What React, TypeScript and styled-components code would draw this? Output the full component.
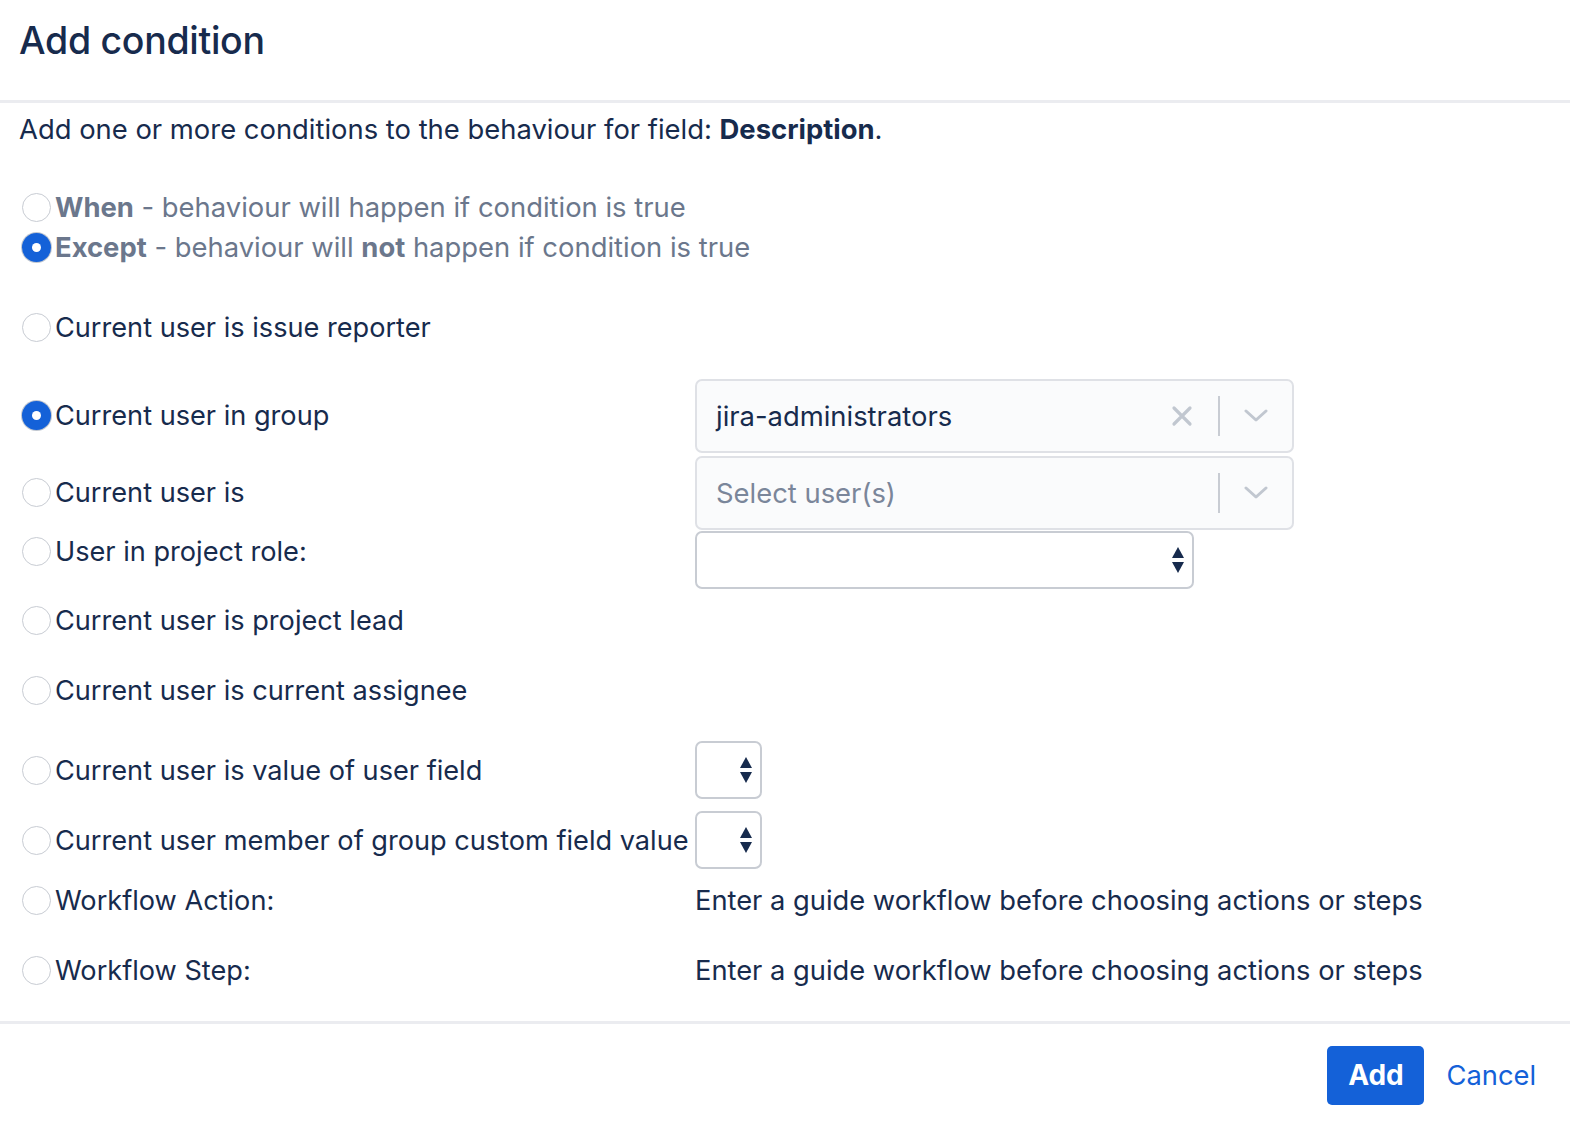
import React from "react";
import styled, { createGlobalStyle } from "styled-components";

const GlobalStyle = createGlobalStyle`
  html, body { margin: 0; padding: 0; background: #ffffff; }
  body {
    font-family: Inter, "Noto Sans", "Liberation Sans", sans-serif;
    color: #172b4d;
    -webkit-font-smoothing: antialiased;
  }
  * { box-sizing: border-box; }
`;

const Dialog = styled.div`
  width: 1570px;
  height: 1124px;
  display: flex;
  flex-direction: column;
  background: #fff;
`;

const Header = styled.header`
  height: 103px;
  padding: 0 20px 20px 19px;
  display: flex;
  align-items: center;
  border-bottom: 3px solid #ebecf0;
`;

const Title = styled.h2`
  margin: 0;
  font-size: 37.5px;
  font-weight: 500;
  color: #172b4d;
  letter-spacing: -0.3px;
`;

const Body = styled.div`
  padding: 0 20px 0 19px;
  flex: 1;
`;

const Intro = styled.p`
  margin: 2px 0 0;
  height: 48px;
  line-height: 48px;
  font-size: 27.4px;
  color: #172b4d;
`;

const ModeGroup = styled.div`
  margin-top: 34px;
  display: flex;
  flex-direction: column;
`;

const RadioLine = styled.label<{ $muted?: boolean }>`
  display: flex;
  align-items: center;
  gap: 4px;
  height: 40px;
  font-size: ${(p) => (p.$muted ? "27.4px" : "27.15px")};
  color: ${(p) => (p.$muted ? "#6b778c" : "#172b4d")};
  white-space: nowrap;
`;

const Radio = styled.span<{ $checked?: boolean }>`
  flex: none;
  margin-left: 3px;
  width: 29px;
  height: 29px;
  border-radius: 50%;
  display: flex;
  align-items: center;
  justify-content: center;
  background: ${(p) => (p.$checked ? "#1461d8" : "#fff")};
  border: ${(p) => (p.$checked ? "none" : "1.5px solid #c8ccd3")};
  box-shadow: ${(p) => (p.$checked ? "0 0 0 1px #c1c7d0" : "none")};
  &::after {
    content: "";
    display: ${(p) => (p.$checked ? "block" : "none")};
    width: 9px;
    height: 9px;
    border-radius: 50%;
    background: #fff;
  }
`;

const Strong = styled.strong`
  font-weight: 700;
`;

const Conditions = styled.div`
  margin-top: 10px;
  display: grid;
  grid-template-columns: 676px 1fr;
  grid-template-rows: 100px 77px 77px 59px 60px 80px 80px 60px 60px 80px;
`;

const Cell = styled.div<{ $top?: boolean }>`
  display: flex;
  align-items: ${(p) => (p.$top ? "flex-start" : "center")};
`;

const SelectBox = styled.div<{ $width: number; $height: number; $soft?: boolean }>`
  width: ${(p) => p.$width}px;
  height: ${(p) => p.$height}px;
  border: 2px solid ${(p) => (p.$soft ? "#dfe1e6" : "#c8ccd3")};
  border-radius: 7px;
  background: ${(p) => (p.$soft ? "#fafbfc" : "#fff")};
  display: flex;
  align-items: center;
  padding-left: 19px;
  font-size: 27.4px;
`;

const Value = styled.span<{ $placeholder?: boolean }>`
  flex: 1;
  color: ${(p) => (p.$placeholder ? "#7a869a" : "#172b4d")};
`;

const Indicators = styled.div`
  display: flex;
  align-items: center;
  height: 100%;
`;

const IconSlot = styled.span`
  width: 72px;
  display: flex;
  align-items: center;
  justify-content: center;
`;

const VSep = styled.span`
  width: 2px;
  height: 40px;
  background: #c8ccd3;
`;

const Arrows = styled.span`
  margin-left: auto;
  margin-right: 7px;
  display: flex;
  align-items: center;
`;

const Hint = styled.span`
  font-size: 27.3px;
  color: #172b4d;
  white-space: nowrap;
`;

const Footer = styled.footer`
  height: 103px;
  border-top: 3px solid #ebecf0;
  display: flex;
  align-items: center;
  justify-content: flex-end;
  padding: 2px 34px 0 0;
  gap: 22px;
`;

const PrimaryButton = styled.button`
  width: 97px;
  height: 59px;
  border: none;
  border-radius: 5px;
  background: #1461d8;
  color: #fff;
  font-family: inherit;
  font-size: 28px;
  font-weight: 700;
  cursor: pointer;
`;

const LinkButton = styled.button`
  border: none;
  background: none;
  padding: 0;
  color: #1461d8;
  font-family: inherit;
  font-size: 27.3px;
  cursor: pointer;
`;

const ClearIcon = () => (
  <svg width="22" height="22" viewBox="0 0 22 22">
    <path d="M3 3 L19 19 M19 3 L3 19" stroke="#c1c7d0" strokeWidth="3.2" strokeLinecap="round" />
  </svg>
);

const ChevronIcon = () => (
  <svg width="24" height="14" viewBox="0 0 24 14">
    <path d="M2 2 L12 11 L22 2" stroke="#c1c7d0" strokeWidth="3" fill="none" strokeLinecap="round" strokeLinejoin="round" />
  </svg>
);

const UpDownIcon = () => (
  <svg width="14" height="28" viewBox="0 0 14 28">
    <path d="M7 1 L13 12 L1 12 Z" fill="#172b4d" />
    <path d="M1 16 L13 16 L7 27 Z" fill="#172b4d" />
  </svg>
);

type Cond = {
  label: string;
  checked?: boolean;
  top?: boolean;
  control?: React.ReactNode;
};

const conditions: Cond[] = [
  { label: "Current user is issue reporter" },
  {
    label: "Current user in group",
    checked: true,
    control: (
      <SelectBox $width={599} $height={74} $soft>
        <Value>jira-administrators</Value>
        <Indicators>
          <IconSlot>
            <ClearIcon />
          </IconSlot>
          <VSep />
          <IconSlot>
            <ChevronIcon />
          </IconSlot>
        </Indicators>
      </SelectBox>
    ),
  },
  {
    label: "Current user is",
    control: (
      <SelectBox $width={599} $height={74} $soft>
        <Value $placeholder>Select user(s)</Value>
        <Indicators>
          <VSep />
          <IconSlot>
            <ChevronIcon />
          </IconSlot>
        </Indicators>
      </SelectBox>
    ),
  },
  {
    label: "User in project role:",
    top: true,
    control: (
      <SelectBox $width={499} $height={58}>
        <Arrows>
          <UpDownIcon />
        </Arrows>
      </SelectBox>
    ),
  },
  { label: "Current user is project lead" },
  { label: "Current user is current assignee" },
  {
    label: "Current user is value of user field",
    control: (
      <SelectBox $width={67} $height={58}>
        <Arrows>
          <UpDownIcon />
        </Arrows>
      </SelectBox>
    ),
  },
  {
    label: "Current user member of group custom field value",
    control: (
      <SelectBox $width={67} $height={58}>
        <Arrows>
          <UpDownIcon />
        </Arrows>
      </SelectBox>
    ),
  },
  {
    label: "Workflow Action:",
    control: <Hint>Enter a guide workflow before choosing actions or steps</Hint>,
  },
  {
    label: "Workflow Step:",
    control: <Hint>Enter a guide workflow before choosing actions or steps</Hint>,
  },
];

export default function App() {
  return (
    <>
      <GlobalStyle />
      <Dialog>
        <Header>
          <Title>Add condition</Title>
        </Header>
        <Body>
          <Intro>
            Add one or more conditions to the behaviour for field: <Strong>Description</Strong>.
          </Intro>
          <ModeGroup>
            <RadioLine $muted>
              <Radio />
              <span>
                <Strong>When</Strong> - behaviour will happen if condition is true
              </span>
            </RadioLine>
            <RadioLine $muted>
              <Radio $checked />
              <span>
                <Strong>Except</Strong> - behaviour will <Strong>not</Strong> happen if condition is true
              </span>
            </RadioLine>
          </ModeGroup>
          <Conditions>
            {conditions.map((c) => (
              <React.Fragment key={c.label}>
                <Cell $top={c.top}>
                  <RadioLine>
                    <Radio $checked={c.checked} />
                    <span>{c.label}</span>
                  </RadioLine>
                </Cell>
                <Cell $top={c.top}>{c.control}</Cell>
              </React.Fragment>
            ))}
          </Conditions>
        </Body>
        <Footer>
          <PrimaryButton>Add</PrimaryButton>
          <LinkButton>Cancel</LinkButton>
        </Footer>
      </Dialog>
    </>
  );
}
